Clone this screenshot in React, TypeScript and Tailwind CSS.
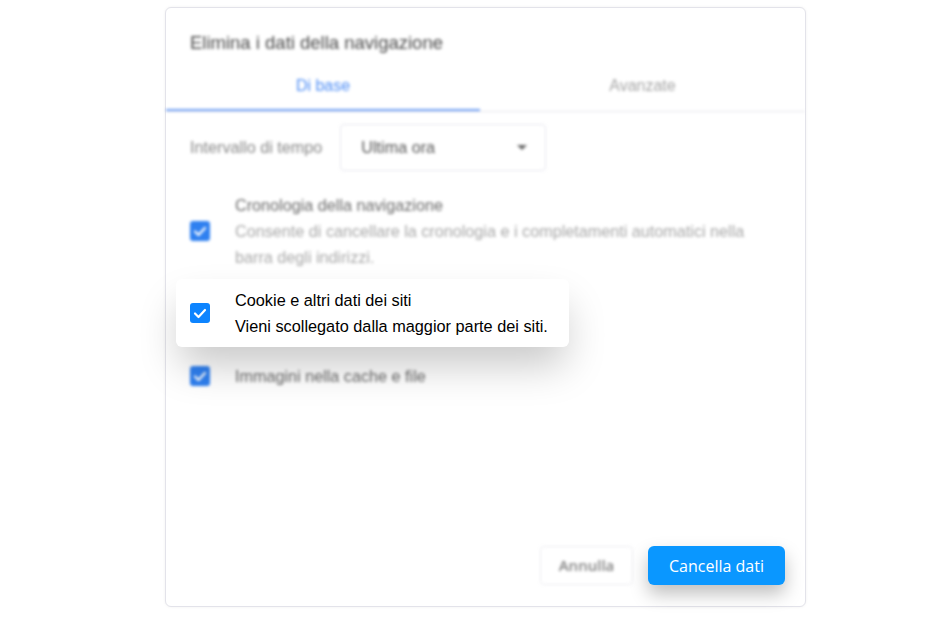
import React from 'react';

const Check: React.FC<{ blurred?: boolean }> = ({ blurred }) => (
  <span
    className={`flex h-5 w-5 shrink-0 items-center justify-center rounded-[3px] ${
      blurred ? 'bg-[#2f80f0]' : 'bg-[#0d84ff]'
    }`}
  >
    <svg viewBox="0 0 20 20" className="h-5 w-5" fill="none">
      <polyline points="5,10.5 8.5,14 15,7" stroke="white" strokeWidth="2.2" strokeLinecap="round" strokeLinejoin="round" />
    </svg>
  </span>
);

const App: React.FC = () => {
  return (
    <div className="flex min-h-screen bg-white pl-[165px] pt-[7px] font-['Liberation_Sans',Arial,sans-serif]">
      <div className="flex h-[600px] w-[641px] flex-col rounded-md border border-[#e3e3ea] bg-white shadow-[0_0_3px_rgba(0,0,0,0.06)]">
        <div className="blur-[1.4px]">
          <h1 className="px-6 pt-[23px] text-[18.5px] leading-[24px] text-[#4a4a4a]">Elimina i dati della navigazione</h1>
          <div className="mt-[15px] flex border-b border-[#e4e4ea]">
            <div className="w-[314px] border-b-2 border-[#6b9df5] pb-[11px] pt-[4px] text-center text-base text-[#4f8ef5]">Di base</div>
            <div className="flex-1 pb-[11px] pt-[4px] text-center text-base text-[#a5a5a5]">Avanzate</div>
          </div>
          <div className="mt-[12px] flex items-center gap-[18px] px-6">
            <span className="text-[16.2px] text-[#888]">Intervallo di tempo</span>
            <div className="flex h-[47px] w-[206px] items-center justify-between rounded border border-[#e6e6ee] pl-5 pr-[18px]">
              <span className="text-[16.2px] text-[#555]">Ultima ora</span>
              <span className="h-0 w-0 border-x-[5px] border-t-[5px] border-x-transparent border-t-[#666]" />
            </div>
          </div>
          <div className="mt-[21px] flex items-center gap-[25px] px-6">
            <Check blurred />
            <div className="text-[16.2px] leading-[26px]">
              <div className="text-[#6a6a6a]">Cronologia della navigazione</div>
              <div className="w-[525px] text-[#a8a8a8]">
                Consente di cancellare la cronologia e i completamenti automatici nella barra degli indirizzi.
              </div>
            </div>
          </div>
        </div>

        <div className="relative z-10 ml-[10px] mt-[9px] flex w-[393px] items-center gap-[25px] rounded-md bg-white py-2 pl-[14px] shadow-[0_22px_40px_-4px_rgba(0,0,0,0.22)]">
          <Check />
          <div className="text-[16.3px] leading-[26px] text-black">
            <div>Cookie e altri dati dei siti</div>
            <div>Vieni scollegato dalla maggior parte dei siti.</div>
          </div>
        </div>

        <div className="mt-4 flex items-center gap-[25px] px-6 blur-[1.4px]">
          <Check blurred />
          <span className="text-[16.2px] leading-[26px] text-[#6a6a6a]">Immagini nella cache e file</span>
        </div>

        <div className="flex-1" />

        <div className="flex justify-end gap-[15px] px-5 pb-[21px] font-['Open_Sans',sans-serif]">
          <button className="h-[39px] w-[93px] rounded border border-[#ececf0] text-[15px] font-semibold text-[#808080] blur-[1.4px]">
            Annulla
          </button>
          <button className="h-[39px] w-[137px] rounded-md bg-[#0a97ff] text-base text-white shadow-[0_9px_18px_rgba(0,0,0,0.25)]">
            Cancella dati
          </button>
        </div>
      </div>
    </div>
  );
};

export default App;
